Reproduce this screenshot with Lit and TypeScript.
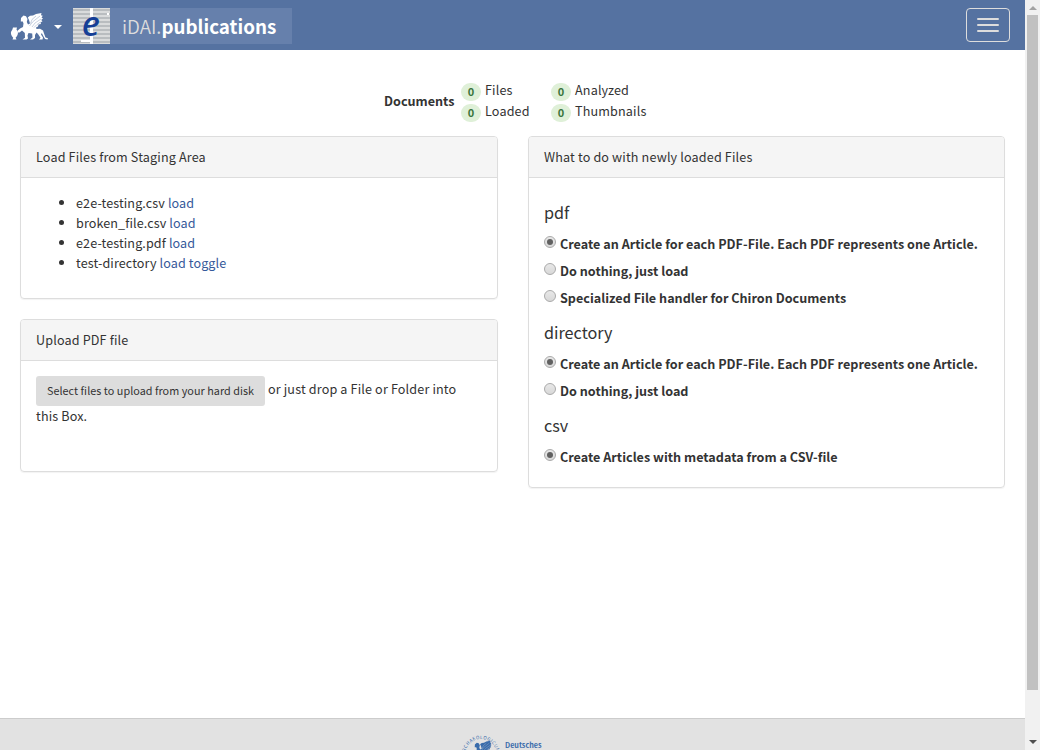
import { LitElement, html, css, svg } from "lit";
import { customElement } from "lit/decorators.js";

const griffin = (gap: string) => svg`
  <path d="M13 10 L15.500 7.500 L18 8.200 L19.500 11 L18.800 14 L20 16.500 L22 15.500 L21 12 L19.800 9.500 L22 7.800 L25 7.500 L28 6 L33.500 5 L33 7.200 L34.800 7.800 L33.500 9.600 L35 10.600 L33.200 12 L34.500 13.200 L32.500 14.500 L33 16 L30.500 16.600 L30 18.500 L28 19.500 L28.500 21 L32 20.700 L35 22.500 L36.200 26 L37.500 29.500 L40 30.300 L39.500 31.500 L37 31 L35 27.500 L33.800 25 L33 26.500 L35 29.500 L34.500 31.500 L31 31.500 L32.500 29.800 L30 26 L28.500 24.500 L27 27 L27 30 L25 31.500 L22 31.500 L24.500 29.500 L24.200 25.500 L20.500 25 L19.500 27.500 L20 30.500 L18.500 31.500 L14.500 31.500 L17 29.800 L16.800 25 L14 22.500 L11.500 24.500 L9.500 24.500 L9.500 22.800 L12 20.500 L15 19 L15.500 15.500 L14.800 13.500 L12.800 13.500 Z"/>
  <path d="M21.500 18 L24.500 14 L32 8 M24 19 L27 15 L33 11 M26 19.500 L29 16.500 L32.500 14 M22.500 15.500 L24 11.500 L28 8" fill="none" stroke=${gap} stroke-width=".5" opacity=".65"/>
  <path d="M5 19.500 h4 l-.5 2 q3.200 4-.9 8.200 l.9 1.800 h-4 l.7-1.800 q-4-4.200-.8-8.200 Z"/>`;

const files = [
  { name: "e2e-testing.csv", actions: ["load"] },
  { name: "broken_file.csv", actions: ["load"] },
  { name: "e2e-testing.pdf", actions: ["load"] },
  { name: "test-directory", actions: ["load", "toggle"] },
];

const article = "Create an Article for each PDF-File. Each PDF represents one Article.";
const groups = [
  { name: "pdf", options: [article, "Do nothing, just load", "Specialized File handler for Chiron Documents"] },
  { name: "directory", options: [article, "Do nothing, just load"] },
  { name: "csv", options: ["Create Articles with metadata from a CSV-file"] },
];

@customElement("app-root")
export class AppRoot extends LitElement {
  static styles = css`
    :host {
      display: flex;
      height: 750px;
      overflow: hidden;
      font: 12.6px/20px "Noto Sans CJK SC", "Noto Sans", sans-serif;
      letter-spacing: 0.15px;
      color: #333;
      background: #fff;
    }
    * { box-sizing: border-box; }
    .page { flex: 1; min-width: 0; display: flex; flex-direction: column; }
    .nav {
      height: 50px; flex: none; background: #5572a1;
      display: flex; align-items: center; padding: 2px 15px 0 8px;
    }
    .griffin { width: 44px; height: 36px; fill: #fff; }
    .caret { margin: 1px 11px 0 2px; border: 4px solid transparent; border-top-color: #fff; border-bottom: 0; }
    .logo { width: 219px; height: 36px; background: #6680ac; display: flex; align-items: center; }
    .mark { width: 37px; height: 36px; margin-right: 12px; }
    .brand { color: #ddd; font-size: 18.8px; font-weight: 350; line-height: 36px; white-space: nowrap; letter-spacing: 0; }
    .brand b { color: #fff; font-weight: 700; }
    .burger {
      margin: -2px 0 0 auto; width: 44px; height: 34px; padding: 9px 10px;
      border: 1px solid #ddd; border-radius: 4px; background: none;
      display: flex; flex-direction: column; gap: 4px;
    }
    .burger i { height: 2px; background: #ddd; border-radius: 1px; }
    main { flex: 1; padding: 30px 20px 0; }
    .status { display: flex; align-items: center; height: 42px; margin-left: 364px; }
    .status b { width: 77px; letter-spacing: 0; }
    .counts { display: grid; grid-template-columns: 90px auto; grid-auto-rows: 21px; }
    .count { display: flex; align-items: flex-start; gap: 4px; white-space: nowrap; }
    .badge {
      width: 20px; height: 18px; margin-top: 3px; border-radius: 10px; background: #dff0d8; color: #3c763d;
      font-size: 11px; font-weight: 700; line-height: 17px; text-align: center; letter-spacing: 0;
    }
    .columns { display: grid; grid-template-columns: 1fr 1fr; gap: 30px; margin-top: 14px; align-items: start; }
    .stack { display: grid; gap: 20px; }
    .panel { border: 1px solid #ddd; border-radius: 4px; box-shadow: 0 1px 1px rgba(0, 0, 0, 0.05); }
    .head { padding: 10px 15px; height: 41px; background: #f5f5f5; border-bottom: 1px solid #ddd; border-radius: 3px 3px 0 0; }
    .body { padding: 15px; }
    .wide .head, .wide .body { padding-left: 15.5px; }
    ul { margin: 0 0 10px; padding-left: 40px; letter-spacing: 0.1px; }
    a { color: #36599a; }
    .drop { height: 110px; padding-right: 25px; }
    .pick {
      display: inline-block; width: 229px; height: 30px; padding: 0 0 1px; border: 0; border-radius: 3px;
      background: #ddd; color: #333; font: inherit; font-size: 10.8px; line-height: 29px;
      letter-spacing: 0.04px; vertical-align: middle; white-space: nowrap;
    }
    h4 { margin: 0; padding-top: 9px; height: 39px; font-size: 16.2px; line-height: 20px; font-weight: 400; letter-spacing: 0; }
    .option { display: flex; height: 27px; padding-top: 2px; font-weight: 700; letter-spacing: 0.01px; white-space: nowrap; }
    .radio {
      width: 12px; height: 12px; margin: 2px 4px 0 0; border: 1px solid #aaa; border-radius: 50%;
      background: linear-gradient(#e8e8e8, #d8d8d8); display: grid; place-items: center;
    }
    .on::after { content: ""; width: 6px; height: 6px; border-radius: 50%; background: #606060; }
    footer {
      height: 32px; flex: none; background: #e2e2e2; border-top: 1px solid #ccc; overflow: hidden;
      padding: 15px 0 0 460px; display: flex;
    }
    .seal { width: 42px; height: 42px; flex: none; letter-spacing: 0.45px; }
    .inst { color: #3a6cab; font-size: 7.2px; font-weight: 700; line-height: 10px; letter-spacing: 0; margin: 6px 0 0 3px; }
    .scroll {
      width: 15px; flex: none; background: #f1f1f1; display: flex; flex-direction: column;
      align-items: center; padding: 6px 0;
    }
    .up { border: 4px solid transparent; border-bottom: 4px solid #a3a3a3; border-top: 0; }
    .thumb { width: 11px; height: 675px; background: #c1c1c1; margin-top: 5px; }
    .down { border: 4px solid transparent; border-top: 4px solid #505050; border-bottom: 0; margin-top: auto; }
  `;

  private count(label: string) {
    return html`<div class="count"><span class="badge">0</span><span>${label}</span></div>`;
  }

  render() {
    return html`
      <div class="page">
        <nav class="nav">
          <svg class="griffin" viewBox="0 0 44 36">${griffin("#5572a1")}</svg>
          <span class="caret"></span>
          <div class="logo">
            <svg class="mark" viewBox="0 0 37 36" overflow="visible">
              <rect width="37" height="36" fill="#d9dbdc" />
              ${[1, 5, 9, 13, 17, 21, 25, 29, 33].map((y) => svg`<rect y=${y} width="37" height="2" fill="#b9bdc0"/>`)}
              <path d="M17 0h3v36h-3zM8 32h12v2H8zM34 5h2v2h-2z" fill="#fff" />
              <text x="8.800" y="28" font-family="Noto Sans" font-style="italic" font-weight="500" font-size="35" fill="#153f96">e</text>
            </svg>
            <span class="brand">iDAI.<b>publications</b></span>
          </div>
          <button class="burger" aria-label="Menu"><i></i><i></i><i></i></button>
        </nav>
        <main>
          <div class="status">
            <b>Documents</b>
            <div class="counts">${["Files", "Analyzed", "Loaded", "Thumbnails"].map((l) => this.count(l))}</div>
          </div>
          <div class="columns">
            <div class="stack">
              <section class="panel">
                <div class="head">Load Files from Staging Area</div>
                <div class="body">
                  <ul>
                    ${files.map((f) => html`<li>${f.name}${f.actions.map((a) => html` <a>${a}</a>`)}</li>`)}
                  </ul>
                </div>
              </section>
              <section class="panel">
                <div class="head">Upload PDF file</div>
                <div class="body drop"><button class="pick">Select files to upload from your hard disk</button> or just drop a File or Folder into this Box.</div>
              </section>
            </div>
            <section class="panel wide">
              <div class="head">What to do with newly loaded Files</div>
              <div class="body">
                ${groups.map(
                  (g) => html`<h4>${g.name}</h4>
                    ${g.options.map((o, i) => html`<div class="option"><span class="radio ${i ? "" : "on"}"></span><span>${o}</span></div>`)}`
                )}
              </div>
            </section>
          </div>
        </main>
        <footer>
          <svg class="seal" viewBox="0 0 42 42" fill="#3a6cab">
            <path id="arc" d="M5 21 A16 16 0 0 1 37 21 L37 30" fill="none" />
            <text font-size="4.600" font-family="Noto Sans CJK SC"><textPath href="#arc">ARCHAEOLOGICUM</textPath></text>
            <g transform="translate(5 3) scale(.76)">${griffin("#e2e2e2")}</g>
          </svg>
          <span class="inst">Deutsches</span>
        </footer>
      </div>
      <div class="scroll"><span class="up"></span><span class="thumb"></span><span class="down"></span></div>
    `;
  }
}
